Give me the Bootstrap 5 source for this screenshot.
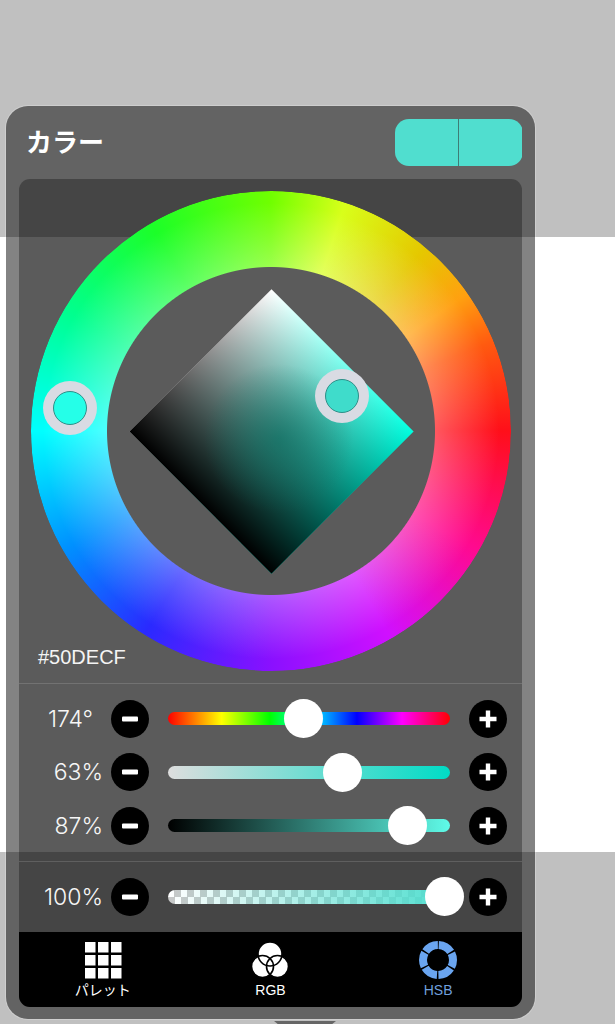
<!DOCTYPE html>
<html lang="ja">
<head>
    <meta charset="UTF-8">
    <meta name="viewport" content="width=device-width, initial-scale=1.0">
    <link href="https://cdn.jsdelivr.net/npm/bootstrap@5.3.0/dist/css/bootstrap.min.css" rel="stylesheet">
    <title>カラー</title>
    <style>
        body { background: #fff; height: 1024px; overflow: hidden; font-family: "Liberation Sans", "Noto Sans CJK JP", sans-serif; color: #fff; }
        .band-gray { background: #c0c0c0; }
        .band-top { height: 237px; }
        .band-mid { height: 615px; background: #fff; }
        .band-bottom { height: 172px; }

        .picker-panel { position: absolute; left: 6px; top: 106px; width: 529px; height: 913px; border-radius: 22px; background: rgba(0,0,0,.485); box-shadow: 0 0 0 1px rgba(255,255,255,.22); }
        .picker-tip { position: absolute; left: 268px; top: 915px; width: 62px; height: 4px; background: #666; clip-path: polygon(0 0, 100% 0, 92% 100%, 8% 100%); }
        .picker-head { height: 73px; padding: 13px 12px 0 20px; }
        .picker-title { font-family: "Noto Sans CJK JP", sans-serif; font-size: 26px; font-weight: 700; line-height: 43px; }
        .swatch { width: 128px; height: 47px; border-radius: 14px; overflow: hidden; }
        .swatch-half { background: #50decf; }
        .swatch-half + .swatch-half { border-left: 1px solid #3e7d76; margin-left: -1px; }

        .picker-body { margin: 0 13px 0 13px; height: 828px; border-radius: 11px; overflow: hidden; background: rgba(0,0,0,.3); }
        .wheel-area { height: 505px; padding: 12px 0 0 12px; border-bottom: 1px solid rgba(255,255,255,.14); }
        .wheel-box { width: 480px; height: 480px; }
        .hue-ring { position: absolute; inset: 0; border-radius: 50%;
            background: radial-gradient(circle closest-side, rgba(255,255,255,.3) 164px, rgba(255,255,255,0) 228px),
                conic-gradient(#70ff00 0deg, #d8ff1a 18deg, #e5c800 40deg, #ffa010 55deg, #ff5a10 68deg, #ff0f1a 90deg, #ff0a90 120deg, #d010ff 150deg, #8a10ff 180deg, #2a2aff 212deg, #0090ff 240deg, #00ffff 270deg, #00ff90 300deg, #1cff28 330deg, #70ff00 360deg);
            -webkit-mask: radial-gradient(circle closest-side, transparent 163.5px, #000 164.5px);
            mask: radial-gradient(circle closest-side, transparent 163.5px, #000 164.5px); }
        .sb-square { position: absolute; left: 139.5px; top: 139.5px; width: 201px; height: 201px; transform: rotate(45deg);
            background: radial-gradient(circle at 55% 50%, rgba(0,110,95,.5), rgba(0,110,95,0) 50%), linear-gradient(to top, #000, rgba(0,0,0,0)), linear-gradient(to right, #fff, #00ffe0); }
        .ring-handle { position: absolute; width: 54px; height: 54px; margin: -27px 0 0 -27px; border-radius: 50%; background: #d9dbe3; padding: 10px; }
        .ring-handle > div { width: 34px; height: 34px; border-radius: 50%; border: 1px solid #2f8f88; }
        .fill-hue { background: #25ffe8; }
        .fill-sb { background: #3fdccb; }
        .hex-label { position: absolute; left: 19px; bottom: 14px; font-size: 20px; line-height: 24px; color: #f4f4f4; }

        .slider-group { padding: 8px 0 8.5px; border-bottom: 1px solid rgba(255,255,255,.14); }
        .slider-group.alpha-group { border-bottom: 0; padding: 8px 0; height: 70px; }
        .slider-line { height: 53.5px; padding-right: 15px; }
        .slider-value { width: 85px; margin-right: 8px; font-family: Inter, "Liberation Sans", sans-serif; font-weight: 300; font-size: 23px; text-align: right; color: #f6f6f6; }
        .slider-value.deg { padding-right: 10px; }
        .round-btn { width: 38px; height: 38px; padding: 0; border: 0; border-radius: 50%; background: #000; flex: none; }
        .round-btn:hover { background: #000; }
        .round-btn svg { display: block; margin: auto; }
        .track { height: 13px; width: 282px; margin: 0 19px 0 19px; border-radius: 7px; flex: none; }
        .track-hue { background: linear-gradient(to right, #f00, #ff0 19%, #0f0 36%, #0ff 50%, #00f 67%, #f0f 83%, #f00); }
        .track-sat { background: linear-gradient(to right, #dedede, #00dcc6); }
        .track-bri { background: linear-gradient(to right, #000, #5ffbe8); }
        .track-alpha { height: 14px; background: linear-gradient(to right, rgba(80,222,207,0), #50decf), repeating-conic-gradient(#c8c8c8 0 25%, #fff 0 50%) 0 0 / 13px 14px; }
        .thumb { position: absolute; top: 50%; width: 39px; height: 39px; margin: -19.5px 0 0 -19.5px; border-radius: 50%; background: #fff; }

        .tab-strip { height: 75px; background: #000; }
        .tab-item { font-size: 14px; line-height: 17px; padding-top: 9px; color: #fff; }
        .tab-item svg { display: block; margin: 0 auto 3px; }
        .tab-item.active-tab { color: #6f9fdc; }
    </style>
</head>
<body class="m-0">

<div class="band-gray band-top"></div>
<div class="band-mid"></div>
<div class="band-gray band-bottom"></div>

<div class="picker-panel">
    <div class="picker-head d-flex justify-content-between">
        <div class="picker-title">カラー</div>
        <div class="swatch d-flex">
            <div class="swatch-half w-50"></div>
            <div class="swatch-half w-50"></div>
        </div>
    </div>

    <div class="picker-body">
        <div class="wheel-area position-relative">
            <div class="wheel-box position-relative">
                <div class="hue-ring"></div>
                <div class="sb-square"></div>
                <div class="ring-handle" style="left:39px;top:217px"><div class="fill-hue"></div></div>
                <div class="ring-handle" style="left:311px;top:205px"><div class="fill-sb"></div></div>
            </div>
            <div class="hex-label">#50DECF</div>
        </div>

        <div class="slider-group">
            <div class="slider-line d-flex align-items-center">
                <div class="slider-value deg">174°</div>
                <button class="round-btn"><svg width="18" height="18"><rect x="1" y="6.500" width="16" height="5" rx="1" fill="#fff"/></svg></button>
                <div class="track track-hue position-relative"><div class="thumb" style="left:48.2%"></div></div>
                <button class="round-btn"><svg width="18" height="18"><path d="M.5 6.800h6.300V.5h4.400v6.300h6.300v4.400h-6.300v6.300H6.800v-6.300H.5z" fill="#fff"/></svg></button>
            </div>
            <div class="slider-line d-flex align-items-center">
                <div class="slider-value">63%</div>
                <button class="round-btn"><svg width="18" height="18"><rect x="1" y="6.500" width="16" height="5" rx="1" fill="#fff"/></svg></button>
                <div class="track track-sat position-relative"><div class="thumb" style="left:62%"></div></div>
                <button class="round-btn"><svg width="18" height="18"><path d="M.5 6.800h6.300V.5h4.400v6.300h6.300v4.400h-6.300v6.300H6.800v-6.300H.5z" fill="#fff"/></svg></button>
            </div>
            <div class="slider-line d-flex align-items-center">
                <div class="slider-value">87%</div>
                <button class="round-btn"><svg width="18" height="18"><rect x="1" y="6.500" width="16" height="5" rx="1" fill="#fff"/></svg></button>
                <div class="track track-bri position-relative"><div class="thumb" style="left:85.1%"></div></div>
                <button class="round-btn"><svg width="18" height="18"><path d="M.5 6.800h6.300V.5h4.400v6.300h6.300v4.400h-6.300v6.300H6.800v-6.300H.5z" fill="#fff"/></svg></button>
            </div>
        </div>

        <div class="slider-group alpha-group">
            <div class="slider-line d-flex align-items-center">
                <div class="slider-value">100%</div>
                <button class="round-btn"><svg width="18" height="18"><rect x="1" y="6.500" width="16" height="5" rx="1" fill="#fff"/></svg></button>
                <div class="track track-alpha position-relative"><div class="thumb" style="left:97.9%"></div></div>
                <button class="round-btn"><svg width="18" height="18"><path d="M.5 6.800h6.300V.5h4.400v6.300h6.300v4.400h-6.300v6.300H6.800v-6.300H.5z" fill="#fff"/></svg></button>
            </div>
        </div>

        <div class="tab-strip row g-0 text-center">
            <div class="tab-item col-4">
                <svg width="38" height="38" viewBox="0 0 38 38" fill="#fff">
                    <rect x="1" y="1" width="10.500" height="10.500"/><rect x="14" y="1" width="10.500" height="10.500"/><rect x="27" y="1" width="10.500" height="10.500"/>
                    <rect x="1" y="14" width="10.500" height="10.500"/><rect x="14" y="14" width="10.500" height="10.500"/><rect x="27" y="14" width="10.500" height="10.500"/>
                    <rect x="1" y="27" width="10.500" height="10.500"/><rect x="14" y="27" width="10.500" height="10.500"/><rect x="27" y="27" width="10.500" height="10.500"/>
                </svg>
                パレット
            </div>
            <div class="tab-item col-4">
                <svg width="38" height="38" viewBox="0 0 38 38" fill="#fff">
                    <circle cx="19" cy="13" r="12"/><circle cx="11.500" cy="25.500" r="11"/><circle cx="26.500" cy="25.500" r="11"/>
                    <g fill="none" stroke="#000" stroke-width="1.600"><circle cx="19" cy="13" r="12"/><circle cx="11.500" cy="25.500" r="11"/><circle cx="26.500" cy="25.500" r="11"/></g>
                </svg>
                RGB
            </div>
            <div class="tab-item col-4 active-tab">
                <svg width="38" height="38" viewBox="0 0 38 38">
                    <circle cx="19" cy="19" r="15" fill="none" stroke="#6aa5f0" stroke-width="8" stroke-dasharray="14.200 1.508" stroke-dashoffset="-0.754" transform="rotate(-90 19 19)"/>
                </svg>
                HSB
            </div>
        </div>
    </div>
    <div class="picker-tip"></div>
</div>

<script src="https://cdn.jsdelivr.net/npm/bootstrap@5.3.0/dist/js/bootstrap.bundle.min.js"></script>
</body>
</html>
